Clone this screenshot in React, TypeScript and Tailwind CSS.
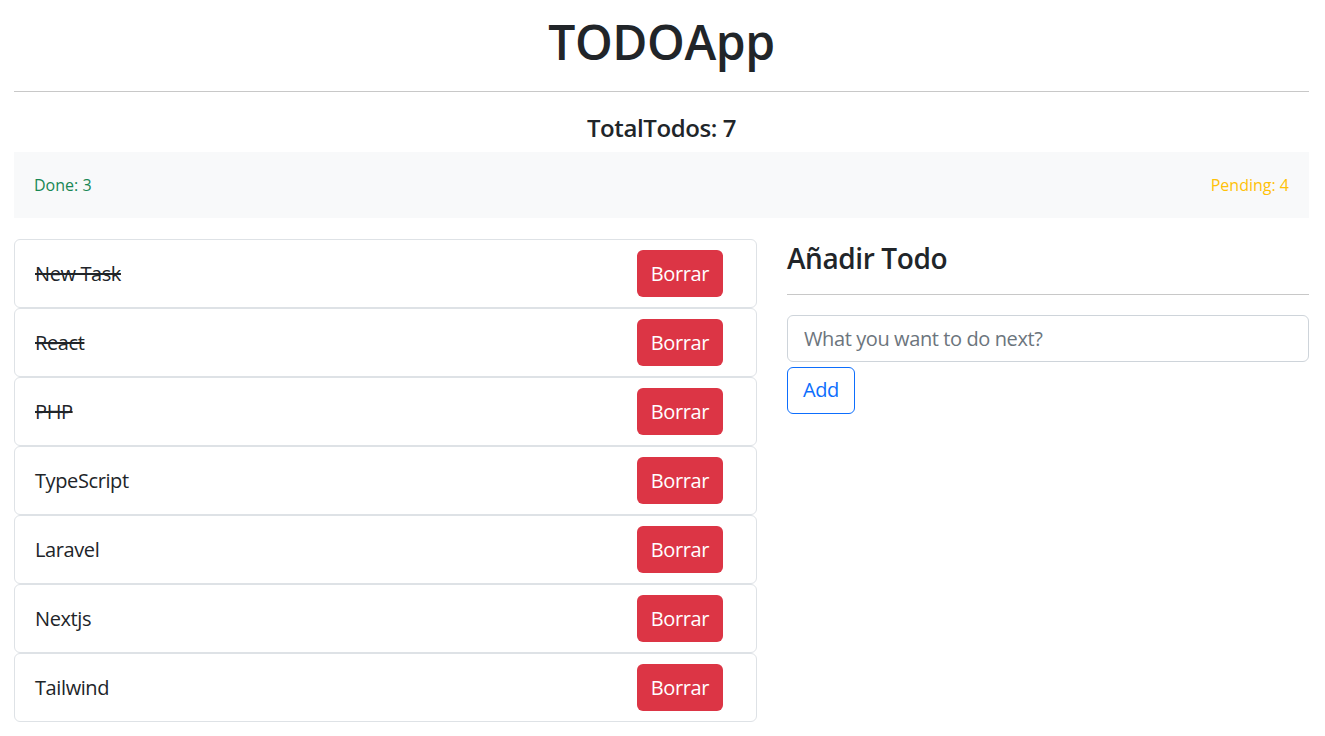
import React, { useState } from 'react';

type Todo = {
  id: number;
  desc: string;
  done: boolean;
};

const initialTodos: Todo[] = [
  { id: 1, desc: 'New Task', done: true },
  { id: 2, desc: 'React', done: true },
  { id: 3, desc: 'PHP', done: true },
  { id: 4, desc: 'TypeScript', done: false },
  { id: 5, desc: 'Laravel', done: false },
  { id: 6, desc: 'Nextjs', done: false },
  { id: 7, desc: 'Tailwind', done: false },
];

const App: React.FC = () => {
  const [todos, setTodos] = useState<Todo[]>(initialTodos);
  const [desc, setDesc] = useState('');

  const done = todos.filter((t) => t.done).length;
  const pending = todos.length - done;

  const handleAdd = (e: React.FormEvent) => {
    e.preventDefault();
    if (desc.trim().length <= 1) return;
    setTodos([...todos, { id: Date.now(), desc, done: false }]);
    setDesc('');
  };

  const toggle = (id: number) => {
    setTodos(todos.map((t) => (t.id === id ? { ...t, done: !t.done } : t)));
  };

  const remove = (id: number) => {
    setTodos(todos.filter((t) => t.id !== id));
  };

  return (
    <div className="min-h-screen bg-white pl-[14px] pr-[16px] text-[#212529] tracking-[-0.025em] font-['Segoe_UI','Open_Sans',sans-serif]">
      <h1 className="pt-[13px] text-center text-[48px] leading-[1.2] font-semibold">TODOApp</h1>
      <hr className="mt-[20px] border-t border-[#c8c8c8]" />

      <h4 className="mt-[22px] text-center text-[24px] leading-[1.2] font-semibold">
        TotalTodos: {todos.length}
      </h4>

      <div className="mt-[10px] flex h-[66px] items-center justify-between bg-[#f8f9fa] px-[20px] text-[16px] tracking-normal">
        <span className="text-[#198754]">Done: {done}</span>
        <span className="text-[#ffc107]">Pending: {pending}</span>
      </div>

      <div className="mt-[21px] flex gap-[30px]">
        <ul className="flex w-[743px] flex-col">
          {todos.map((todo) => (
            <li
              key={todo.id}
              className="flex h-[69px] items-center justify-between rounded-md border border-[#dee2e6] pl-5 pr-[33px]"
            >
              <span
                onClick={() => toggle(todo.id)}
                className={`cursor-pointer text-[20px] ${todo.done ? 'line-through' : ''}`}
              >
                {todo.desc}
              </span>
              <button
                onClick={() => remove(todo.id)}
                className="h-[47px] rounded-md bg-[#dc3545] px-[14px] text-[20px] text-white"
              >
                Borrar
              </button>
            </li>
          ))}
        </ul>

        <div className="flex-1">
          <h3 className="mt-[3px] text-[28px] leading-[1.2] font-semibold">Añadir Todo</h3>
          <hr className="mt-[18px] border-t border-[#c8c8c8]" />
          <form onSubmit={handleAdd} className="mt-[20px]">
            <input
              type="text"
              value={desc}
              onChange={(e) => setDesc(e.target.value)}
              placeholder="What you want to do next?"
              className="h-[47px] w-full rounded-md border border-[#ced4da] px-4 text-[20px] outline-none placeholder:text-[#6c757d]"
            />
            <button
              type="submit"
              className="mt-[5px] h-[47px] rounded-md border border-[#0d6efd] px-[15px] text-[20px] text-[#0d6efd]"
            >
              Add
            </button>
          </form>
        </div>
      </div>
    </div>
  );
};

export default App;
